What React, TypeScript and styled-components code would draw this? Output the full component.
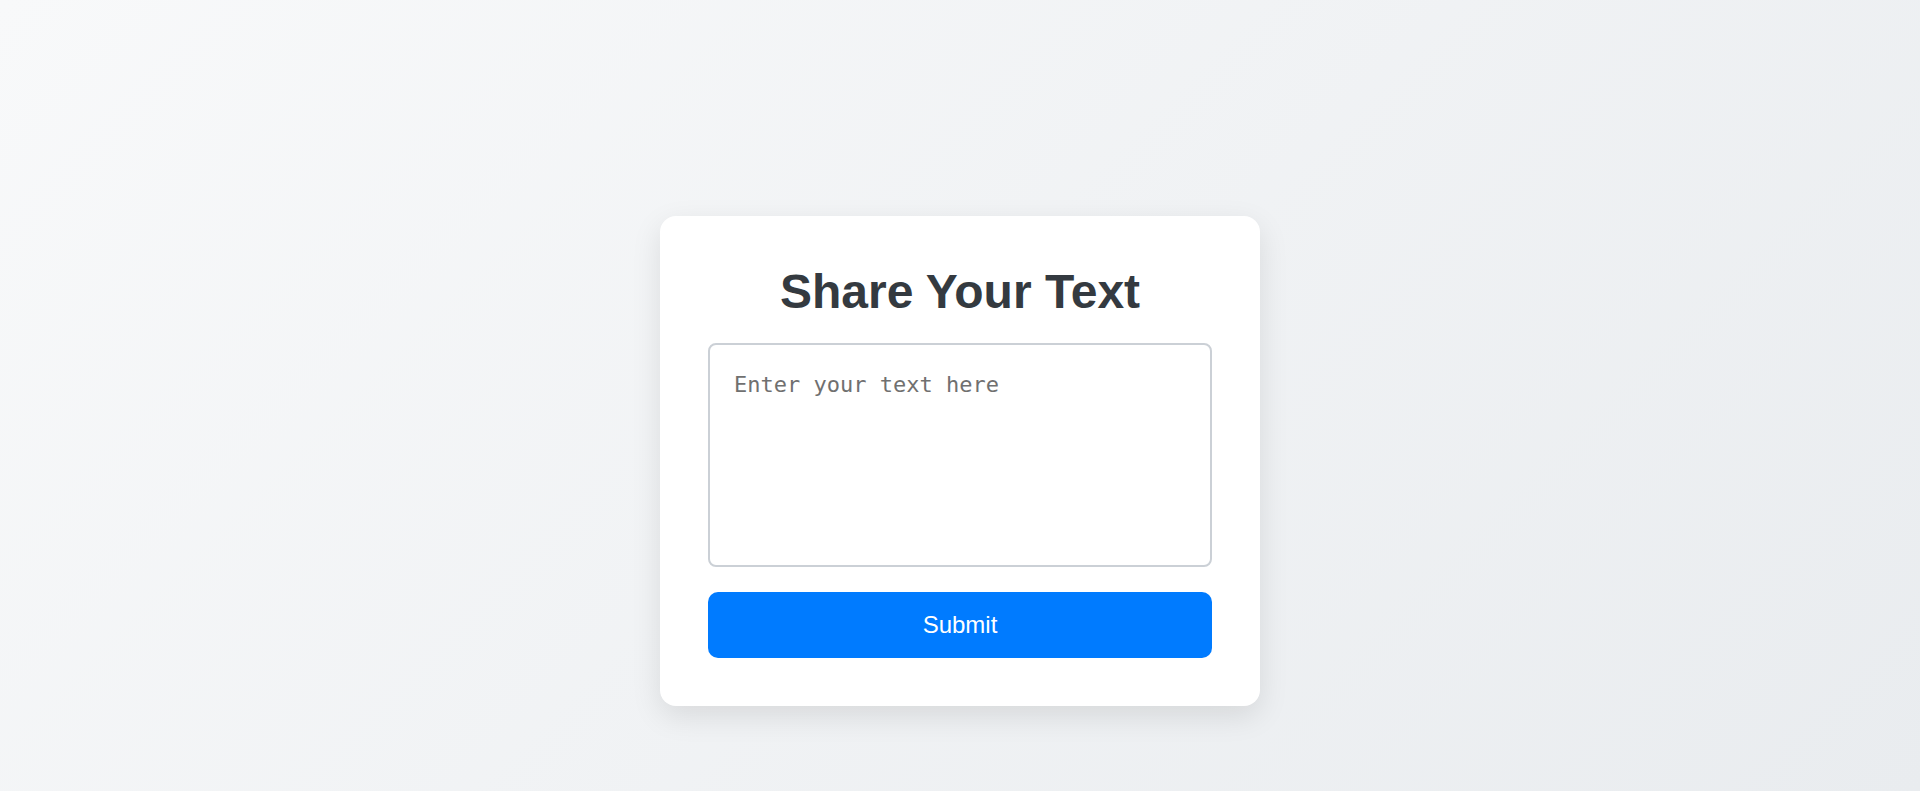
import React from "react";
import styled, { createGlobalStyle } from "styled-components";

const GlobalStyle = createGlobalStyle`
  html, body {
    margin: 0;
    padding: 0;
  }
  body {
    min-height: 100vh;
    background: linear-gradient(135deg, #f8f9fa 0%, #e9ecef 100%);
    font-family: "Liberation Sans", Arial, sans-serif;
  }
`;

const Page = styled.main`
  min-height: 100vh;
  box-sizing: border-box;
  display: flex;
  flex-direction: column;
  align-items: center;
  padding-top: 216px;
`;

const Card = styled.form`
  width: 600px;
  box-sizing: border-box;
  padding: 48px;
  background: #ffffff;
  border-radius: 16px;
  box-shadow: 0 10px 30px rgba(0, 0, 0, 0.1);
  display: flex;
  flex-direction: column;
`;

const Title = styled.h1`
  margin: 0 0 24px;
  font-family: "Liberation Sans", Arial, sans-serif;
  font-size: 48px;
  font-weight: 700;
  line-height: normal;
  color: #343a40;
  text-align: center;
`;

const TextArea = styled.textarea`
  display: block;
  width: 100%;
  height: 224px;
  box-sizing: border-box;
  margin: 0 0 25px;
  padding: 27px 24px 24px;
  border: 2px solid #cbd0d6;
  border-radius: 8px;
  font-family: "DejaVu Sans Mono", monospace;
  font-size: 22px;
  color: #343a40;
  resize: none;
  outline: none;

  &::placeholder {
    color: #707070;
  }
`;

const SubmitButton = styled.button`
  width: 100%;
  height: 66px;
  border: none;
  border-radius: 10px;
  background: #007bff;
  color: #ffffff;
  font-family: "Liberation Sans", Arial, sans-serif;
  font-size: 24px;
  cursor: pointer;
`;

export default function App() {
  return (
    <>
      <GlobalStyle />
      <Page>
        <Card onSubmit={(e) => e.preventDefault()}>
          <Title>Share Your Text</Title>
          <TextArea placeholder="Enter your text here" />
          <SubmitButton type="submit">Submit</SubmitButton>
        </Card>
      </Page>
    </>
  );
}
